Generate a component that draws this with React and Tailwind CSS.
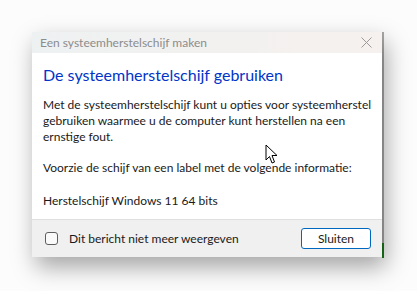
import React from "react";

const font = { fontFamily: 'Lato, "Noto Sans", sans-serif' };

const Cursor = () => (
  <svg width="14" height="21" viewBox="0 0 14 21" className="absolute left-[265px] top-[144px]">
    <path d="M1 1 L1 16 L4.5 12.5 L7 19 L9.5 18 L7 11.5 L12 11.5 Z" fill="#fff" stroke="#000" strokeWidth="1" strokeLinejoin="round" />
  </svg>
);

export default function App() {
  return (
    <div className="relative w-[417px] h-[291px] overflow-hidden bg-[#fcfcfc] pt-[32px] pl-[32px]" style={font}>
      {/* bit of the window behind */}
      <div className="absolute left-[382px] top-[32px] w-[2px] h-[226px] bg-[#a9a9a9]" />
      <div className="absolute left-[382px] top-[243px] w-[2px] h-[15px] bg-[#1c7a1c]" />

      <div className="relative w-[350px] flex flex-col bg-white shadow-[4px_10px_22px_rgba(0,0,0,0.35)]">
        <div className="h-[21px] flex items-center justify-between pl-[8px] pr-[10px] bg-gradient-to-r from-[#eef1f2] to-[#f6f1ee]">
          <span className="text-[12px] text-[#8c8c8c] leading-none">Een systeemherstelschijf maken</span>
          <svg width="11" height="11" viewBox="0 0 11 11">
            <path d="M0.5 0.5 L10.5 10.5 M10.5 0.5 L0.5 10.5" stroke="#9a9a9a" strokeWidth="1" />
          </svg>
        </div>

        <div className="px-[11px] pt-[11px] pb-[10px] text-[12px] text-[#1a1a1a] whitespace-nowrap">
          <h1 className="text-[16px] leading-[22px] text-[#0035c8]">De systeemherstelschijf gebruiken</h1>
          <p className="mt-[11px] leading-[16px]">
            Met de systeemherstelschijf kunt u opties voor systeemherstel
            <br />
            gebruiken waarmee u de computer kunt herstellen na een
            <br />
            ernstige fout.
          </p>
          <p className="mt-[15px] leading-[16px]">Voorzie de schijf van een label met de volgende informatie:</p>
          <p className="mt-[17px] leading-[16px]">Herstelschijf Windows 11 64 bits</p>
        </div>

        <div className="h-[38px] flex items-center justify-between border-t border-[#dfdfdf] bg-[#f0f0f0] pl-[13px] pr-[11px]">
          <label className="flex items-center gap-[11px] text-[12px] text-[#1a1a1a]">
            <span className="w-[13px] h-[13px] rounded-[3px] border border-[#5f5f5f] bg-[#fafafa]" />
            Dit bericht niet meer weergeven
          </label>
          <button className="w-[70px] h-[21px] rounded-[3px] border border-[#0067c0] bg-white text-[12px] text-[#1a1a1a] leading-none">
            Sluiten
          </button>
        </div>
      </div>

      <Cursor />
    </div>
  );
}
